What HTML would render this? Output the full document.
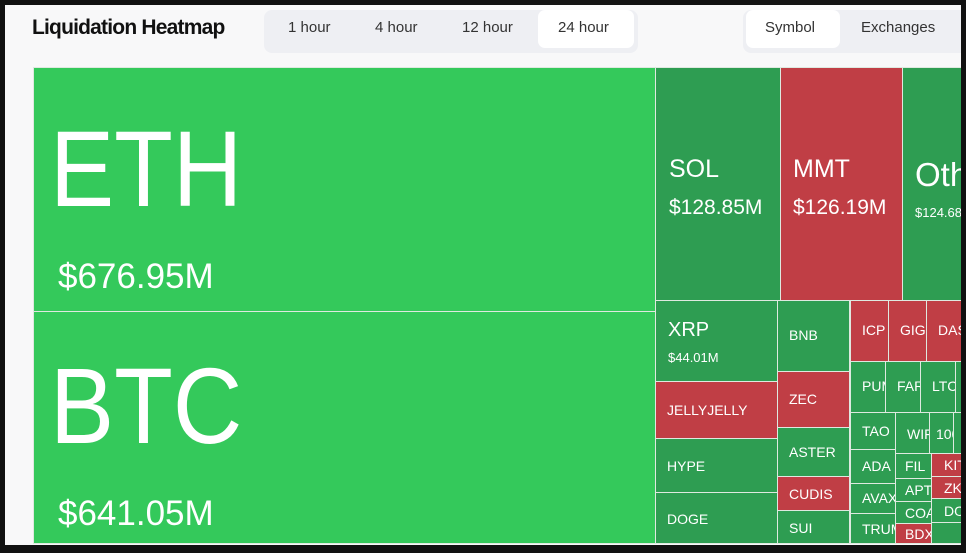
<!DOCTYPE html>
<html><head><meta charset="utf-8"><style>
*{margin:0;padding:0;box-sizing:border-box}
body{width:966px;height:553px;background:#111;overflow:hidden;font-family:"Liberation Sans",sans-serif;position:relative}
#pg{position:absolute;left:5px;top:5px;width:956px;height:540px;background:#f8f8f9;overflow:hidden}
.c{position:absolute;color:#fff;overflow:hidden;white-space:nowrap;border:1px solid #dfe9e0}
.g{background:#2e9d52}.G{background:#34c95b}.r{background:#c03e45}
.c span{position:absolute;left:11px;font-size:14px}
.t{position:absolute;font-size:15px;color:#333;top:14px}
</style></head><body>
<div id="pg">
<div style="position:absolute;left:27px;top:11px;font-size:21px;font-weight:bold;color:#111;letter-spacing:-0.8px">Liquidation Heatmap</div>
<div style="position:absolute;left:259px;top:5px;width:374px;height:43px;background:#eeeff3;border-radius:8px"></div>
<div style="position:absolute;left:533px;top:5px;width:96px;height:38px;background:#fff;border-radius:7px"></div>
<div class="t" style="left:283px">1 hour</div>
<div class="t" style="left:370px">4 hour</div>
<div class="t" style="left:457px">12 hour</div>
<div class="t" style="left:553px">24 hour</div>
<div style="position:absolute;left:738px;top:5px;width:230px;height:43px;background:#eeeff3;border-radius:8px"></div>
<div style="position:absolute;left:741px;top:5px;width:94px;height:38px;background:#fff;border-radius:7px"></div>
<div class="t" style="left:760px">Symbol</div>
<div class="t" style="left:856px">Exchanges</div>
</div>
<div style="position:absolute;left:0;top:0;width:966px;height:553px">
<div class="c G" style="left:33px;top:67px;width:623px;height:245px"><span style="left:16px;top:38px;font-size:108px;transform:scaleX(0.89);transform-origin:left">ETH</span><span style="left:24px;top:189px;font-size:35px">$676.95M</span></div>
<div class="c G" style="left:33px;top:311px;width:623px;height:233px"><span style="left:16px;top:31px;font-size:108px;transform:scaleX(0.89);transform-origin:left">BTC</span><span style="left:24px;top:182px;font-size:35px">$641.05M</span></div>
<div class="c g" style="left:655px;top:67px;width:126px;height:234px"><span style="left:13px;top:87px;font-size:25px">SOL</span><span style="left:13px;top:128px;font-size:21px">$128.85M</span></div>
<div class="c r" style="left:780px;top:67px;width:123px;height:234px"><span style="left:12px;top:87px;font-size:25px">MMT</span><span style="left:12px;top:128px;font-size:21px">$126.19M</span></div>
<div class="c g" style="left:902px;top:67px;width:70px;height:234px"><span style="left:12px;top:88px;font-size:33px">Others</span><span style="left:12px;top:137px;font-size:13px">$124.68M</span></div>
<div class="c g" style="left:655px;top:300px;width:123px;height:82px"><span style="left:12px;top:18px;font-size:20px">XRP</span><span style="left:12px;top:49px;font-size:13px">$44.01M</span></div>
<div class="c r" style="left:655px;top:381px;width:123px;height:58px"><span style="top:20px">JELLYJELLY</span></div>
<div class="c g" style="left:655px;top:438px;width:123px;height:55px"><span style="top:19px">HYPE</span></div>
<div class="c g" style="left:655px;top:492px;width:123px;height:52px"><span style="top:18px">DOGE</span></div>
<div class="c g" style="left:777px;top:300px;width:73px;height:72px"><span style="top:26px">BNB</span></div>
<div class="c r" style="left:777px;top:371px;width:73px;height:57px"><span style="top:19px">ZEC</span></div>
<div class="c g" style="left:777px;top:427px;width:73px;height:50px"><span style="top:16px">ASTER</span></div>
<div class="c r" style="left:777px;top:476px;width:73px;height:35px"><span style="top:9px">CUDIS</span></div>
<div class="c g" style="left:777px;top:510px;width:73px;height:34px"><span style="top:9px">SUI</span></div>
<div class="c r" style="left:850px;top:300px;width:39px;height:62px"><span style="top:21px">ICP</span></div>
<div class="c r" style="left:888px;top:300px;width:39px;height:62px"><span style="top:21px">GIG</span></div>
<div class="c r" style="left:926px;top:300px;width:40px;height:62px"><span style="top:21px">DASH</span></div>
<div class="c g" style="left:850px;top:361px;width:36px;height:52px"><span style="top:16px">PUMP</span></div>
<div class="c g" style="left:885px;top:361px;width:36px;height:52px"><span style="top:16px">FART</span></div>
<div class="c g" style="left:920px;top:361px;width:36px;height:52px"><span style="top:16px">LTC</span></div>
<div class="c g" style="left:955px;top:361px;width:10px;height:52px"></div>
<div class="c g" style="left:850px;top:412px;width:46px;height:38px"><span style="top:10px">TAO</span></div>
<div class="c g" style="left:850px;top:449px;width:46px;height:35px"><span style="top:8px">ADA</span></div>
<div class="c g" style="left:850px;top:483px;width:46px;height:31px"><span style="top:6px">AVAX</span></div>
<div class="c g" style="left:850px;top:513px;width:46px;height:31px"><span style="top:7px">TRUMP</span></div>
<div class="c g" style="left:895px;top:412px;width:35px;height:42px"><span style="top:13px">WIF</span></div>
<div class="c g" style="left:929px;top:412px;width:25px;height:42px"><span style="left:6px;top:13px">1000</span></div>
<div class="c g" style="left:953px;top:412px;width:12px;height:42px"></div>
<div class="c g" style="left:895px;top:453px;width:37px;height:26px"><span style="left:9px;top:4px">FIL</span></div>
<div class="c g" style="left:895px;top:478px;width:37px;height:24px"><span style="left:9px;top:3px">APT</span></div>
<div class="c g" style="left:895px;top:501px;width:37px;height:23px"><span style="left:9px;top:3px">COAI</span></div>
<div class="c r" style="left:895px;top:523px;width:37px;height:21px"><span style="left:9px;top:2px">BDXN</span></div>
<div class="c r" style="left:931px;top:453px;width:35px;height:24px"><span style="left:12px;top:3px">KITE</span></div>
<div class="c r" style="left:931px;top:476px;width:35px;height:23px"><span style="left:12px;top:3px">ZK</span></div>
<div class="c g" style="left:931px;top:498px;width:35px;height:25px"><span style="left:12px;top:4px">DOT</span></div>
<div class="c g" style="left:931px;top:522px;width:35px;height:22px"></div>
</div>
<div style="position:absolute;left:0;top:0;width:966px;height:5px;background:#111"></div>
<div style="position:absolute;left:0;top:0;width:5px;height:553px;background:#111"></div>
<div style="position:absolute;left:0;top:545px;width:966px;height:8px;background:#111"></div>
<div style="position:absolute;left:961px;top:0;width:5px;height:553px;background:#111"></div>
</body></html>
